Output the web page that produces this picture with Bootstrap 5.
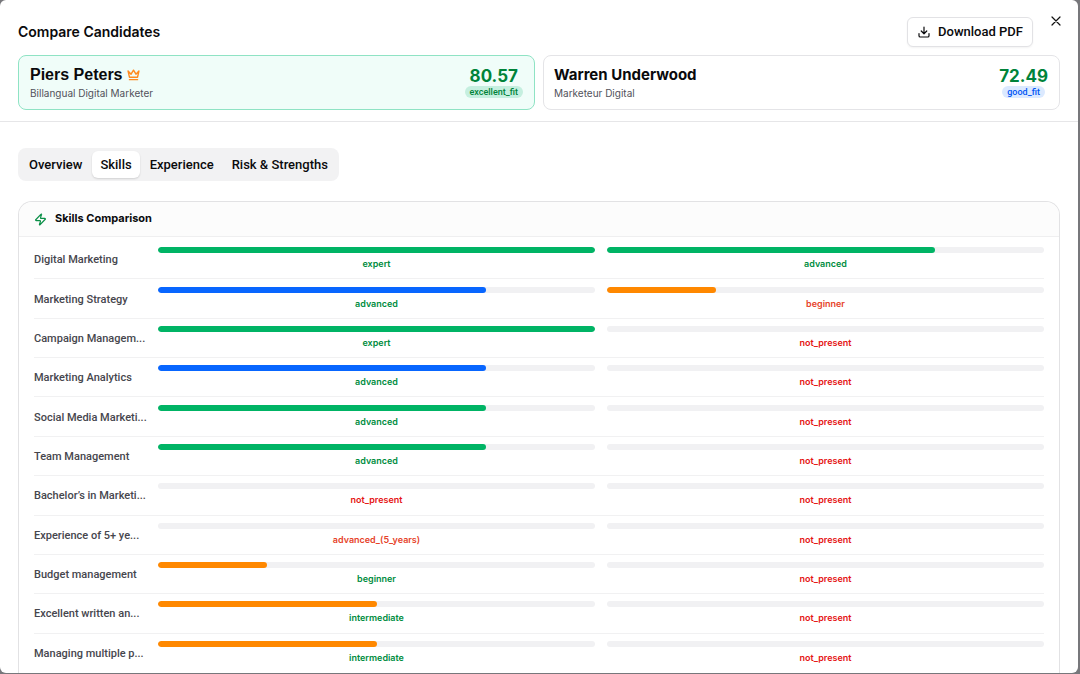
<!DOCTYPE html>
<html lang="en">
<head>
<meta charset="utf-8">
<meta name="viewport" content="width=device-width, initial-scale=1">
<title>Compare Candidates</title>
<link href="https://cdn.jsdelivr.net/npm/bootstrap@5.3.0/dist/css/bootstrap.min.css" rel="stylesheet">
<script src="https://cdn.jsdelivr.net/npm/bootstrap@5.3.0/dist/js/bootstrap.bundle.min.js"></script>
<style>
  body { font-family: Inter, "Liberation Sans", sans-serif; background: #77777b; color: #0a0a0c; padding: 0 2px 1px 0; }
  .compare-dialog { height: calc(100vh - 1px); border-radius: 6px; background: #fff; overflow: hidden; }
  .dialog-head { padding: 17px 18px 11px; border-bottom: 1px solid #e6e6e8; }
  .dialog-title { font-size: 14px; line-height: 30px; font-weight: 600; }
  .btn-download { height: 30px; padding: 0 9px 0 10px; margin-right: 27px; border: 1px solid #e2e2e5; border-radius: 6px; font: 500 13px/28px Roboto, sans-serif; color: #0a0a0c; background: #fff; box-shadow: 0 1px 2px rgba(0,0,0,.05); }
  .btn-dismiss { top: 13px; right: 14px; width: 16px; height: 16px; color: #111; }
  .candidate { height: 55px; padding: 0 11px 0 10px; border: 1px solid #e4e4e7; border-radius: 8px; }
  .candidate-top { padding-left: 11px; background: #f0fdf9; border-color: #8fe3c4; }
  .candidate-name { font: 700 15px/20px Inter, sans-serif; }
  .candidate-top .candidate-name { font: 700 16px/20px "Liberation Sans", sans-serif; }
  .candidate-role { font-size: 10px; line-height: 16px; color: #52525b; }
  .score { font-size: 17px; line-height: 19px; font-weight: 700; color: #00833a; }
  .fit-pill { font: 500 9px/12px Roboto, sans-serif; padding: 0 5px; border-radius: 6px; }
  .fit-excellent { background: #c5efdf; color: #00833a; }
  .fit-good { background: #dbe9ff; color: #0055f5; }
  .tab-strip { padding: 3px; column-gap: 2px; border-radius: 8px; background: #f2f2f3; }
  .tab-strip .nav-link { font: 500 13px/27px Roboto, sans-serif; padding: 0 8px; border-radius: 6px; color: #0a0a0c; }
  .tab-strip .nav-link.active { background: #fff; color: #0a0a0c; box-shadow: 0 1px 2px rgba(0,0,0,.14); }
  .dialog-body { padding: 26px 18px 0; min-height: 0; }
  .skills-panel { margin-top: 20px; border: 1px solid #e2e2e4; border-bottom: 0; border-radius: 14px 14px 0 0; min-height: 0; }
  .skills-head { height: 35px; padding: 0 15px; background: #fcfcfc; border-bottom: 1px solid #efeff0; border-radius: 13px 13px 0 0; font-size: 11px; font-weight: 700; }
  .skills-rows { padding: 3px 15px 0; }
  .skill-row { display: grid; grid-template-columns: 112px 1fr 1fr; gap: 12px; min-height: 39px; flex: 1 1 0; align-items: center; border-bottom: 1px solid #f1f1f2; }
  .skill-row:last-child { border-bottom-color: transparent; }
  .skill-name { padding-top: 2px; font: 500 11px/16px Roboto, sans-serif; color: #46464d; white-space: nowrap; }
  .level { font-size: 9px; line-height: 14px; font-weight: 600; text-align: center; color: #008c3e; }
  .level.absent { color: #e51414; }
  .level.weak { color: #e6432a; }
  .progress { height: 6px; margin-bottom: 4px; border-radius: 3px; background: #f1f1f3; }
  .progress-bar { border-radius: 3px; }
  .bar-green { background: #00b465; }
  .bar-blue { background: #0866ff; }
  .bar-orange { background: #ff8800; }
</style>
</head>
<body>
<main class="compare-dialog position-relative d-flex flex-column">
  <header class="dialog-head">
    <div class="d-flex justify-content-between align-items-center mb-2">
      <h1 class="dialog-title m-0">Compare Candidates</h1>
      <button type="button" class="btn btn-download d-flex align-items-center gap-2">
        <svg width="12" height="12" viewBox="0 0 24 24" fill="none" stroke="currentColor" stroke-width="2.4" stroke-linecap="round" stroke-linejoin="round" aria-hidden="true"><path d="M12 2v13M6.5 10l5.500 5.500L17.500 10M2 15v4.500a2.500 2.500 0 0 0 2.500 2.500h15a2.500 2.500 0 0 0 2.500-2.500V15"/></svg>
        Download PDF
      </button>
      <button type="button" class="btn btn-dismiss position-absolute p-0 border-0 d-flex align-items-center justify-content-center" aria-label="Close">
        <svg width="10" height="10" viewBox="0 0 10 10" fill="none" stroke="currentColor" stroke-width="1.2" stroke-linecap="round" aria-hidden="true"><path d="M1 1l8 8M9 1L1 9"/></svg>
      </button>
    </div>
    <div class="row row-cols-2 gx-2">
      <div class="col">
        <section class="candidate candidate-top d-flex justify-content-between align-items-center">
          <div>
            <h2 class="candidate-name m-0 d-flex align-items-center gap-1">Piers Peters
              <svg width="13" height="13" viewBox="0 0 24 24" fill="none" stroke="#ff8a1f" stroke-width="2.600" stroke-linecap="round" stroke-linejoin="round" aria-hidden="true"><path d="M12 4l4.500 7.500L22 5.500l-2.500 11.500h-15L2 5.500l5.500 6zM4.500 21.500h15"/></svg>
            </h2>
            <p class="candidate-role m-0">Billangual Digital Marketer</p>
          </div>
          <div class="d-flex flex-column align-items-center">
            <span class="score">80.57</span>
            <span class="fit-pill fit-excellent">excellent_fit</span>
          </div>
        </section>
      </div>
      <div class="col">
        <section class="candidate d-flex justify-content-between align-items-center">
          <div>
            <h2 class="candidate-name m-0">Warren Underwood</h2>
            <p class="candidate-role m-0">Marketeur Digital</p>
          </div>
          <div class="d-flex flex-column align-items-center">
            <span class="score">72.49</span>
            <span class="fit-pill fit-good">good_fit</span>
          </div>
        </section>
      </div>
    </div>
  </header>

  <div class="dialog-body d-flex flex-column flex-grow-1">
    <nav class="nav tab-strip align-self-start" aria-label="Comparison sections">
      <a class="nav-link" href="#overview">Overview</a>
      <a class="nav-link active" href="#skills" aria-current="page">Skills</a>
      <a class="nav-link" href="#experience">Experience</a>
      <a class="nav-link" href="#risk">Risk &amp; Strengths</a>
    </nav>

    <section class="skills-panel d-flex flex-column flex-grow-1" id="skills">
      <h2 class="skills-head m-0 d-flex align-items-center gap-2">
        <svg width="13" height="13" viewBox="0 0 24 24" fill="none" stroke="#0a8f47" stroke-width="2.300" stroke-linecap="round" stroke-linejoin="round" aria-hidden="true"><path d="M4 14a1 1 0 0 1-.780-1.630l9.900-10.200a.5.5 0 0 1 .860.460l-1.920 6.020A1 1 0 0 0 13 10h7a1 1 0 0 1 .780 1.630l-9.900 10.200a.5.5 0 0 1-.860-.460l1.920-6.020A1 1 0 0 0 11 14z"/></svg>
        Skills Comparison
      </h2>
      <div class="skills-rows d-flex flex-column flex-grow-1">
        <div class="skill-row">
          <div class="skill-name">Digital Marketing</div>
          <div><div class="progress"><div class="progress-bar bar-green w-100"></div></div><div class="level">expert</div></div>
          <div><div class="progress"><div class="progress-bar bar-green w-75"></div></div><div class="level">advanced</div></div>
        </div>
        <div class="skill-row">
          <div class="skill-name">Marketing Strategy</div>
          <div><div class="progress"><div class="progress-bar bar-blue w-75"></div></div><div class="level">advanced</div></div>
          <div><div class="progress"><div class="progress-bar bar-orange w-25"></div></div><div class="level weak">beginner</div></div>
        </div>
        <div class="skill-row">
          <div class="skill-name">Campaign Managem...</div>
          <div><div class="progress"><div class="progress-bar bar-green w-100"></div></div><div class="level">expert</div></div>
          <div><div class="progress"></div><div class="level absent">not_present</div></div>
        </div>
        <div class="skill-row">
          <div class="skill-name">Marketing Analytics</div>
          <div><div class="progress"><div class="progress-bar bar-blue w-75"></div></div><div class="level">advanced</div></div>
          <div><div class="progress"></div><div class="level absent">not_present</div></div>
        </div>
        <div class="skill-row">
          <div class="skill-name">Social Media Marketi...</div>
          <div><div class="progress"><div class="progress-bar bar-green w-75"></div></div><div class="level">advanced</div></div>
          <div><div class="progress"></div><div class="level absent">not_present</div></div>
        </div>
        <div class="skill-row">
          <div class="skill-name">Team Management</div>
          <div><div class="progress"><div class="progress-bar bar-green w-75"></div></div><div class="level">advanced</div></div>
          <div><div class="progress"></div><div class="level absent">not_present</div></div>
        </div>
        <div class="skill-row">
          <div class="skill-name">Bachelor’s in Marketi...</div>
          <div><div class="progress"></div><div class="level absent">not_present</div></div>
          <div><div class="progress"></div><div class="level absent">not_present</div></div>
        </div>
        <div class="skill-row">
          <div class="skill-name">Experience of 5+ ye...</div>
          <div><div class="progress"></div><div class="level weak">advanced_(5_years)</div></div>
          <div><div class="progress"></div><div class="level absent">not_present</div></div>
        </div>
        <div class="skill-row">
          <div class="skill-name">Budget management</div>
          <div><div class="progress"><div class="progress-bar bar-orange w-25"></div></div><div class="level">beginner</div></div>
          <div><div class="progress"></div><div class="level absent">not_present</div></div>
        </div>
        <div class="skill-row">
          <div class="skill-name">Excellent written an...</div>
          <div><div class="progress"><div class="progress-bar bar-orange w-50"></div></div><div class="level">intermediate</div></div>
          <div><div class="progress"></div><div class="level absent">not_present</div></div>
        </div>
        <div class="skill-row">
          <div class="skill-name">Managing multiple p...</div>
          <div><div class="progress"><div class="progress-bar bar-orange w-50"></div></div><div class="level">intermediate</div></div>
          <div><div class="progress"></div><div class="level absent">not_present</div></div>
        </div>
      </div>
    </section>
  </div>
</main>
</body>
</html>
